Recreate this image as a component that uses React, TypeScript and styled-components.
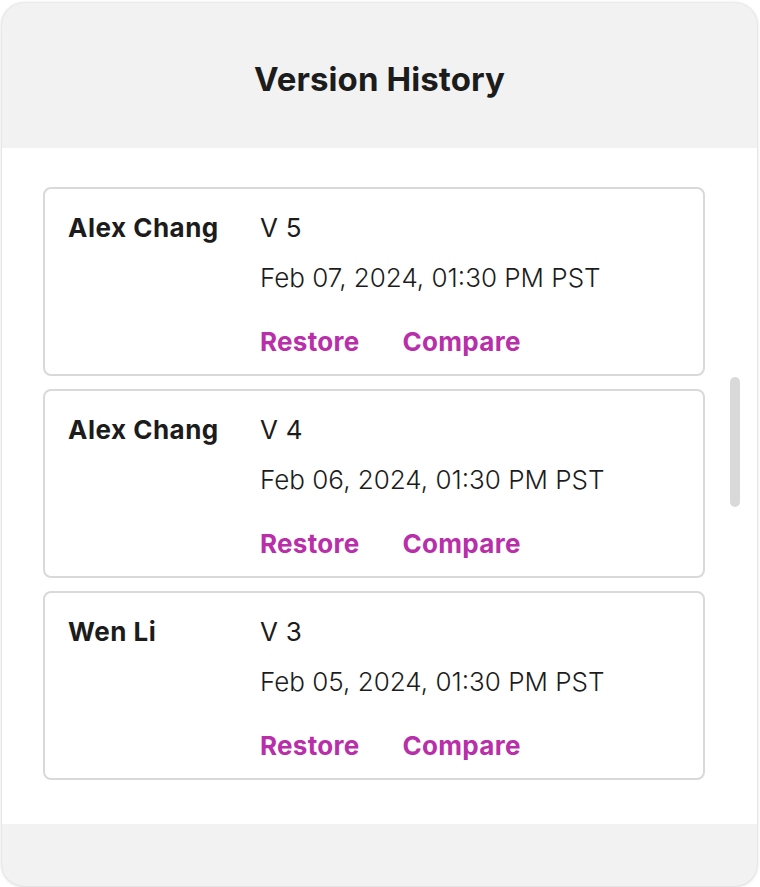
import React from "react";
import styled, { createGlobalStyle } from "styled-components";

const Global = createGlobalStyle`
  html, body { margin: 0; padding: 0; background: #ffffff; }
  body { font-family: Inter, "Noto Sans", sans-serif; color: #1c1c1c; }
  * { box-sizing: border-box; }
`;

const Page = styled.div`
  padding: 3px 3px 0 2px;
  height: 887px;
  overflow: hidden;
`;

const Modal = styled.div`
  width: 755px;
  height: 883px;
  border-radius: 22px;
  background: #f2f2f2;
  box-shadow: 0 0 3px rgba(0, 0, 0, 0.18), 0 1px 4px rgba(0, 0, 0, 0.08);
  display: flex;
  flex-direction: column;
  overflow: hidden;
`;

const Header = styled.header`
  height: 145px;
  display: flex;
  align-items: center;
  justify-content: center;
  flex-shrink: 0;
`;

const Title = styled.h1`
  margin: 0;
  font-family: Inter, sans-serif;
  font-weight: 700;
  font-size: 33px;
  letter-spacing: 0.1px;
  color: #1c1c1c;
  padding-top: 6px;
`;

const Body = styled.main`
  position: relative;
  height: 676px;
  background: #ffffff;
  padding: 39px 52px 0 41px;
  display: flex;
  flex-direction: column;
  gap: 13px;
  flex-shrink: 0;
`;

const ScrollThumb = styled.div`
  position: absolute;
  left: 728px;
  top: 229px;
  width: 10px;
  height: 130px;
  border-radius: 5px;
  background: #d9d9d9;
`;

const Card = styled.section`
  height: 189px;
  border: 2px solid #d9d9d9;
  border-radius: 8px;
  padding: 24px 24px 0 23px;
  display: grid;
  grid-template-columns: 192px 1fr;
`;

const Name = styled.div`
  font-weight: 700;
  font-size: 26px;
  line-height: 30px;
  letter-spacing: 0.5px;
  color: #1c1c1c;
`;

const Info = styled.div`
  display: flex;
  flex-direction: column;
`;

const Version = styled.div`
  font-weight: 400;
  font-size: 26px;
  line-height: 30px;
  letter-spacing: 0.3px;
  color: #1c1c1c;
`;

const DateText = styled.div`
  margin-top: 20px;
  font-weight: 300;
  font-size: 26px;
  line-height: 30px;
  color: #1c1c1c;
`;

const Actions = styled.div`
  margin-top: 34px;
  display: flex;
  gap: 43px;
`;

const LinkButton = styled.button`
  border: 0;
  background: none;
  padding: 0;
  font-family: Inter, sans-serif;
  font-weight: 700;
  font-size: 26px;
  line-height: 30px;
  letter-spacing: 0.3px;
  color: #b82fa9;
  cursor: pointer;
`;

const Footer = styled.footer`
  flex: 1;
`;

const versions = [
  { name: "Alex Chang", v: "V 5", date: "Feb 07, 2024, 01:30 PM PST" },
  { name: "Alex Chang", v: "V 4", date: "Feb 06, 2024, 01:30 PM PST" },
  { name: "Wen Li", v: "V 3", date: "Feb 05, 2024, 01:30 PM PST" },
];

export default function App() {
  return (
    <>
      <Global />
      <Page>
        <Modal>
          <Header>
            <Title>Version History</Title>
          </Header>
          <Body>
            {versions.map((item) => (
              <Card key={item.v}>
                <Name>{item.name}</Name>
                <Info>
                  <Version>{item.v}</Version>
                  <DateText>{item.date}</DateText>
                  <Actions>
                    <LinkButton>Restore</LinkButton>
                    <LinkButton>Compare</LinkButton>
                  </Actions>
                </Info>
              </Card>
            ))}
            <ScrollThumb />
          </Body>
          <Footer />
        </Modal>
      </Page>
    </>
  );
}
